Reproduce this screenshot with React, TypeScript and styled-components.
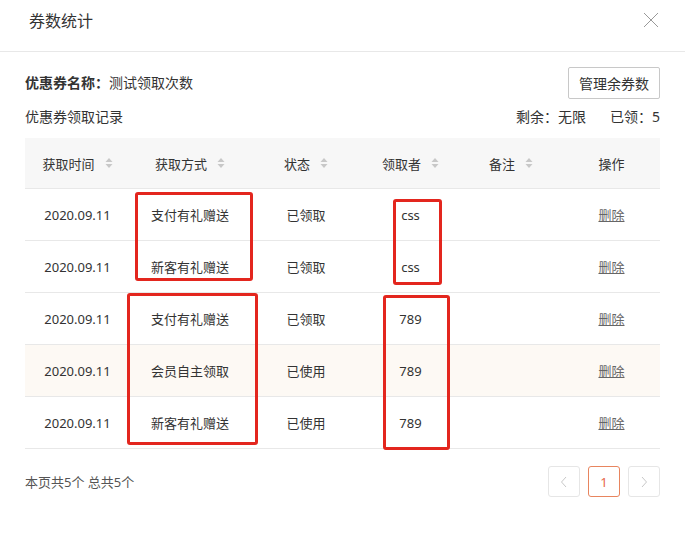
import React from 'react';
import styled, { createGlobalStyle } from 'styled-components';

const GlobalStyle = createGlobalStyle`
  body {
    margin: 0;
    background: #fff;
    font-family: "Noto Sans", "Noto Sans CJK SC", sans-serif;
    color: #333;
  }
`;

const Modal = styled.div`
  width: 685px;
  height: 541px;
  background: #fff;
  box-sizing: border-box;
`;

const Header = styled.div`
  height: 51px;
  display: flex;
  align-items: center;
  justify-content: space-between;
  padding: 0 26px 0 29px;
  border-bottom: 1px solid #e8e8e8;
  box-sizing: content-box;
`;

const Title = styled.div`
  font-size: 16px;
  color: #333;
  margin-top: -12px;
`;

const Close = styled.svg`
  width: 16px;
  height: 16px;
  margin-top: -12px;
`;

const Body = styled.div`
  padding: 15px 25px 0;
`;

const InfoRow = styled.div`
  display: flex;
  align-items: center;
  justify-content: space-between;
  font-size: 14px;
  line-height: 20px;
`;

const Label = styled.b`
  font-weight: bold;
`;

const Button = styled.button`
  height: 32px;
  padding: 0 10px;
  border: 1px solid #c8c8c8;
  border-radius: 2px;
  background: #fff;
  color: #333;
  font-size: 14px;
  font-family: inherit;
`;

const RecordRow = styled.div`
  display: flex;
  justify-content: space-between;
  align-items: center;
  height: 20px;
  margin-top: 7px;
  font-size: 14px;
`;

const Stats = styled.div`
  display: flex;
  gap: 24px;
`;

const TableWrap = styled.div`
  position: relative;
  margin-top: 12px;
`;

const Table = styled.table`
  width: 635px;
  border-collapse: collapse;
  table-layout: fixed;
  font-size: 13px;
`;

const Th = styled.th`
  height: 50px;
  padding: 0;
  background: #f7f7f7;
  font-weight: normal;
  color: #333;
  text-align: center;
  border-bottom: 1px solid #e8e8e8;
`;

const HeadCell = styled.span`
  display: inline-flex;
  align-items: center;
  gap: 10px;
`;

const Tr = styled.tr<{ $hl?: boolean }>`
  background: ${(p) => (p.$hl ? '#fdf9f4' : '#fff')};
`;

const Td = styled.td`
  height: 51px;
  padding: 0;
  text-align: center;
  color: #333;
  border-bottom: 1px solid #e8e8e8;
`;

const DelLink = styled.span`
  color: #666;
  text-decoration: underline;
  cursor: pointer;
`;

const Mark = styled.div`
  position: absolute;
  border: 3px solid #e3261e;
  border-radius: 3px;
  box-sizing: border-box;
  pointer-events: none;
`;

const Footer = styled.div`
  display: flex;
  align-items: center;
  justify-content: space-between;
  margin-top: 17px;
  font-size: 13px;
  color: #555;
`;

const Pager = styled.div`
  display: flex;
  gap: 8px;
`;

const PageBtn = styled.div<{ $active?: boolean }>`
  width: 32px;
  height: 31px;
  box-sizing: border-box;
  border: 1px solid ${(p) => (p.$active ? '#e8855f' : '#e6e6e6')};
  border-radius: 3px;
  display: flex;
  align-items: center;
  justify-content: center;
  color: ${(p) => (p.$active ? '#e8674a' : '#c8c8c8')};
  font-size: 13px;
`;

const SortIcon = () => (
  <svg width="8" height="12" viewBox="0 0 8 12">
    <path d="M4 1 L7.5 5 H0.5 Z" fill="#c8c8c8" />
    <path d="M4 11 L7.5 7 H0.5 Z" fill="#c8c8c8" />
  </svg>
);

const Chevron = ({ dir }: { dir: 'l' | 'r' }) => (
  <svg width="8" height="12" viewBox="0 0 8 12">
    <path
      d={dir === 'l' ? 'M6 1 L1.5 6 L6 11' : 'M2 1 L6.5 6 L2 11'}
      stroke="#c8c8c8"
      strokeWidth="1"
      fill="none"
    />
  </svg>
);

const columns = [
  { title: '获取时间', width: 105, sort: true },
  { title: '获取方式', width: 120, sort: true },
  { title: '状态', width: 112, sort: true },
  { title: '领取者', width: 97, sort: true },
  { title: '备注', width: 104, sort: true },
  { title: '操作', width: 97, sort: false },
];

const rows = [
  { date: '2020.09.11', way: '支付有礼赠送', status: '已领取', user: 'css' },
  { date: '2020.09.11', way: '新客有礼赠送', status: '已领取', user: 'css' },
  { date: '2020.09.11', way: '支付有礼赠送', status: '已领取', user: '789' },
  { date: '2020.09.11', way: '会员自主领取', status: '已使用', user: '789', hl: true },
  { date: '2020.09.11', way: '新客有礼赠送', status: '已使用', user: '789' },
];

const marks = [
  { left: 110, top: 54, width: 118, height: 89 },
  { left: 368, top: 61, width: 49, height: 86 },
  { left: 102, top: 155, width: 131, height: 152 },
  { left: 358, top: 157, width: 67, height: 155 },
];

const App: React.FC = () => {
  return (
    <Modal>
      <GlobalStyle />
      <Header>
        <Title>券数统计</Title>
        <Close viewBox="0 0 16 16">
          <path d="M1 1 L15 15 M15 1 L1 15" stroke="#999" strokeWidth="1" />
        </Close>
      </Header>
      <Body>
        <InfoRow>
          <span>
            <Label>优惠券名称：</Label>测试领取次数
          </span>
          <Button>管理余券数</Button>
        </InfoRow>
        <RecordRow>
          <span>优惠券领取记录</span>
          <Stats>
            <span>剩余：无限</span>
            <span>已领：5</span>
          </Stats>
        </RecordRow>
        <TableWrap>
          <Table>
            <colgroup>
              {columns.map((c) => (
                <col key={c.title} style={{ width: c.width }} />
              ))}
            </colgroup>
            <thead>
              <tr>
                {columns.map((c) => (
                  <Th key={c.title}>
                    <HeadCell>
                      {c.title}
                      {c.sort && <SortIcon />}
                    </HeadCell>
                  </Th>
                ))}
              </tr>
            </thead>
            <tbody>
              {rows.map((r, i) => (
                <Tr key={i} $hl={r.hl}>
                  <Td>{r.date}</Td>
                  <Td>{r.way}</Td>
                  <Td>{r.status}</Td>
                  <Td>{r.user}</Td>
                  <Td></Td>
                  <Td>
                    <DelLink>删除</DelLink>
                  </Td>
                </Tr>
              ))}
            </tbody>
          </Table>
          {marks.map((m, i) => (
            <Mark key={i} style={m} />
          ))}
        </TableWrap>
        <Footer>
          <span>本页共5个 总共5个</span>
          <Pager>
            <PageBtn>
              <Chevron dir="l" />
            </PageBtn>
            <PageBtn $active>1</PageBtn>
            <PageBtn>
              <Chevron dir="r" />
            </PageBtn>
          </Pager>
        </Footer>
      </Body>
    </Modal>
  );
};

export default App;
